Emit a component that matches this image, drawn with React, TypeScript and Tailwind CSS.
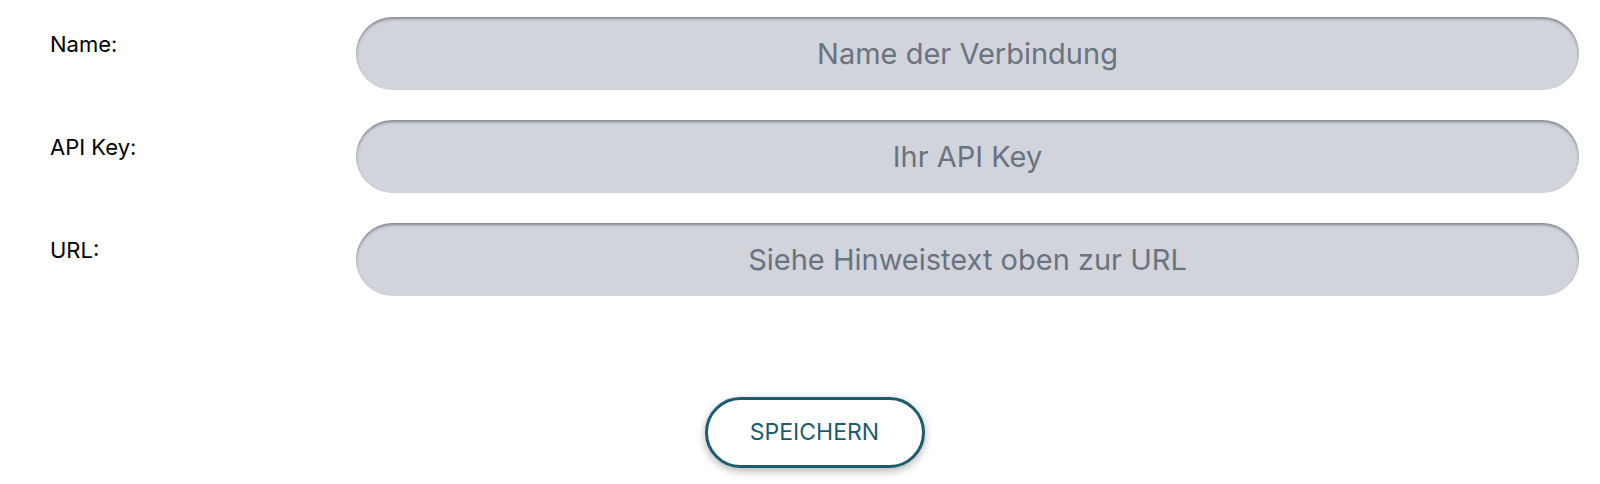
import React, { useState } from 'react';

const fields = [
  { key: 'name', label: 'Name:', placeholder: 'Name der Verbindung' },
  { key: 'apiKey', label: 'API Key:', placeholder: 'Ihr API Key' },
  { key: 'url', label: 'URL:', placeholder: 'Siehe Hinweistext oben zur URL' },
];

export default function App() {
  const [values, setValues] = useState<Record<string, string>>({ name: '', apiKey: '', url: '' });

  return (
    <div className="min-h-[484px] bg-white font-['Inter',sans-serif]">
      <form className="pl-[50px] pr-[21px] pt-[17px]" onSubmit={(e) => e.preventDefault()}>
        <div className="flex flex-col gap-[30px]">
          {fields.map((f) => (
            <div key={f.key} className="flex items-start">
              <label className="w-[306px] shrink-0 pt-[15px] text-[22px] leading-6 text-black">{f.label}</label>
              <input
                type="text"
                className="h-[73px] flex-1 rounded-full bg-[#d1d5db] px-8 text-center text-[29px] text-gray-700 placeholder:text-[#6b7280] shadow-[inset_0_2px_3px_rgba(75,85,99,0.6)] outline-none"
                placeholder={f.placeholder}
                value={values[f.key]}
                onChange={(e) => setValues({ ...values, [f.key]: e.target.value })}
              />
            </div>
          ))}
        </div>
        <div className="flex justify-center pt-[101px]">
          <button
            type="submit"
            className="h-[71px] w-[220px] rounded-full border-[3px] border-[#1b5c6e] bg-white text-[23px] text-[#1b5c6e] shadow-[0_3px_8px_rgba(0,0,0,0.3)]"
          >
            SPEICHERN
          </button>
        </div>
      </form>
    </div>
  );
}
